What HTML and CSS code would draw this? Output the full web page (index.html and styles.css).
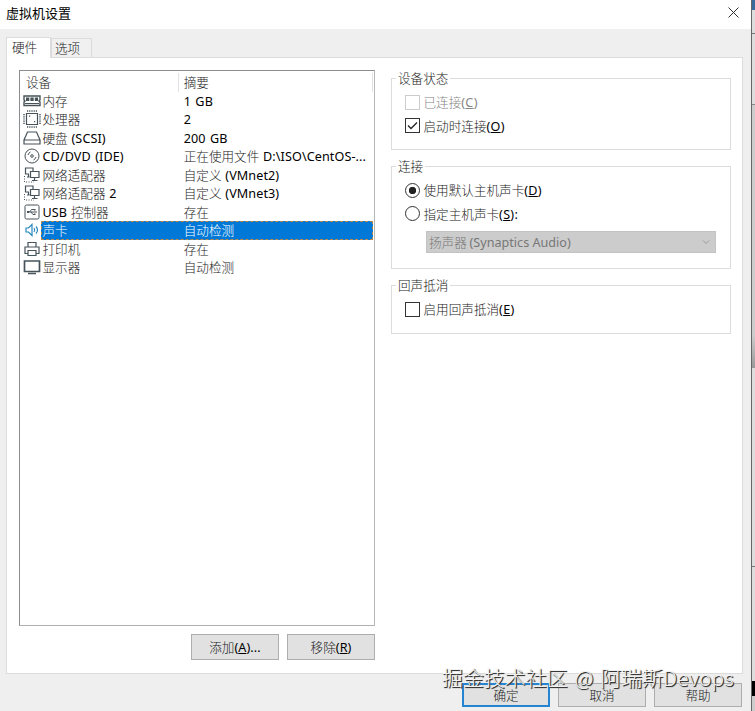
FILE: index.html
```html
<!DOCTYPE html>
<html lang="zh-CN">
<head>
<meta charset="utf-8">
<title>虚拟机设置</title>
<link rel="stylesheet" href="styles.css">
</head>
<body>
<div class="screen">
  <main class="dialog">
    <header class="titlebar">
      <h1>虚拟机设置</h1>
      <svg class="close" viewBox="0 0 11 11"><path d="M.5 .5l10 10M10.5 .5l-10 10"/></svg>
    </header>
    <nav class="tabs"><span class="tab active">硬件</span><span class="tab">选项</span></nav>
    <section class="page">
      <div class="left">
        <div class="list">
          <div class="row head"><span class="name">设备</span><span class="summary">摘要</span></div>
          <div class="row"><svg viewBox="0 0 18 18"><path stroke-width="1.400" d="M1 4h16v4l-1 1 1 1v3.500H1V10l1-1-1-1z"/><path class="solid" d="M3 5.500h3.300v3.500H3zM7.400 5.500h3.300v3.500H7.400zM11.800 5.500h3.300v3.500h-3.300z"/><path d="M2 11.500h14"/></svg><span class="name">内存</span><span class="summary"><b>1 GB</b></span></div>
          <div class="row"><svg viewBox="0 0 18 18"><path stroke-width="1.200" d="M3.500 3.500h11v11h-11z"/><path stroke-dasharray="1.200 1" stroke-width="1.500" d="M4 1h10M4 17h10M1 4v10M17 4v10"/><path class="solid" d="M6 5.500h1.200v1.200H6zM11 11h1.200v1.200H11z"/></svg><span class="name">处理器</span><span class="summary"><b>2</b></span></div>
          <div class="row"><svg viewBox="0 0 18 18"><path stroke-width="1.200" d="M4.500 3h9L17 11v4H1v-4zM1 11h16"/></svg><span class="name">硬盘 <b>(SCSI)</b></span><span class="summary"><b>200 GB</b></span></div>
          <div class="row"><svg viewBox="0 0 18 18"><circle cx="9" cy="9" r="7"/><circle cx="9" cy="9" r="1.300"/><path d="M5 8a4.500 4.500 0 0 1 2.500-3M13 10a4.500 4.500 0 0 1-2.500 3"/></svg><span class="name"><b>CD/DVD (IDE)</b></span><span class="summary">正在使用文件 <b>D:\ISO\CentOS-...</b></span></div>
          <div class="row"><svg viewBox="0 0 18 18"><path stroke-width="1.200" d="M6 8H2.500V2H10v3.500M4 11h2.500M5.500 8v3M7.500 5.500H16v6H7.500zM11.500 11.500V14M9 14.500h5.500"/><path stroke-dasharray="1 1.500" d="M1.500 10v6H11"/></svg><span class="name">网络适配器</span><span class="summary">自定义 <b>(VMnet2)</b></span></div>
          <div class="row"><svg viewBox="0 0 18 18"><path stroke-width="1.200" d="M6 8H2.500V2H10v3.500M4 11h2.500M5.500 8v3M7.500 5.500H16v6H7.500zM11.500 11.500V14M9 14.500h5.500"/><path stroke-dasharray="1 1.500" d="M1.500 10v6H11"/></svg><span class="name">网络适配器 <b>2</b></span><span class="summary">自定义 <b>(VMnet3)</b></span></div>
          <div class="row"><svg viewBox="0 0 18 18"><rect x="2" y="2" width="14" height="14" rx="1.500"/><path d="M4 9h10M6.500 9l2-2.500h2.500M8 9l2 2.500h1.500"/><path class="solid" d="M4 8h2v2H4zM11 6h1.500v1.500H11zM11 10.500h1.500V12H11z"/></svg><span class="name"><b>USB</b> 控制器</span><span class="summary">存在</span></div>
          <div class="row selected"><svg viewBox="0 0 18 18"><path stroke-width="1.200" d="M3 7h2.500L9 3.500v11L5.500 11H3zM11 7q1.500 2 0 4M13 5.500q3 3.500 0 7"/></svg><div class="fill"><span class="name">声卡</span><span class="summary">自动检测</span></div></div>
          <div class="row"><svg viewBox="0 0 18 18"><path stroke-width="1.200" d="M5 7V2.500h8V7M5 13.500H2V7h14v6.500h-3M5 10.500h8v5H5z"/></svg><span class="name">打印机</span><span class="summary">存在</span></div>
          <div class="row"><svg viewBox="0 0 18 18"><path stroke-width="1.700" d="M1.500 3h15v10.500h-15z"/><path stroke-width="1.500" d="M5 15.500h8"/></svg><span class="name">显示器</span><span class="summary">自动检测</span></div>
        </div>
        <div class="actions"><button>添加<b>(<u>A</u>)...</b></button><button>移除<b>(<u>R</u>)</b></button></div>
      </div>
      <div class="right">
        <fieldset class="status"><legend>设备状态</legend>
          <label class="option disabled"><span class="box"></span>已连接<b>(<u>C</u>)</b></label>
          <label class="option"><span class="box"><svg viewBox="0 0 13 13"><path d="M2 6.500l3 3 6-6"/></svg></span>启动时连接<b>(<u>O</u>)</b></label>
        </fieldset>
        <fieldset class="connection"><legend>连接</legend>
          <label class="option"><span class="box radio checked"></span>使用默认主机声卡<b>(<u>D</u>)</b></label>
          <label class="option"><span class="box radio"></span>指定主机声卡<b>(<u>S</u>):</b></label>
          <div class="select"><span>扬声器 <b>(Synaptics Audio)</b></span><svg viewBox="0 0 8 5"><path d="M1 .5l3 3 3-3"/></svg></div>
        </fieldset>
        <fieldset class="echo"><legend>回声抵消</legend>
          <label class="option"><span class="box"></span>启用回声抵消<b>(<u>E</u>)</b></label>
        </fieldset>
      </div>
    </section>
    <footer class="footer"><button class="primary">确定</button><button>取消</button><button>帮助</button></footer>
  </main>
  <aside class="backdrop"><i class="blue"></i><i class="pale"></i><i class="mid"></i><i class="thumb"></i><i class="track"></i><i class="lower"></i><i class="black"></i><i class="end"></i></aside>
  <div class="watermark">掘金技术社区 @ 阿瑞斯Devops</div>
</div>
</body>
</html>
```
FILE: styles.css
```css
* { box-sizing: border-box; }
body { margin: 0; overflow: hidden; }
.screen {
  position: relative; display: flex; width: 755px; height: 711px; overflow: hidden;
  font: 300 12.6px/18px "Noto Sans CJK SC", sans-serif; color: #222;
}
b { font: 400 12.6px/1 "Noto Sans", sans-serif; letter-spacing: .1px; color: #000; }
svg { fill: none; stroke: #47535a; stroke-width: 1; flex: none; }
.solid { fill: #47535a; stroke: none; }
u { text-underline-offset: 1px; }
.dialog { width: 751px; background: #efefef; display: flex; flex-direction: column; }
.titlebar { height: 29px; background: #fff; padding: 0 12px 4px 6px; display: flex; align-items: center; justify-content: space-between; }
h1 { margin: 0; font-size: 13px; font-weight: 400; line-height: 20px; color: #000; }
.close { width: 11px; height: 11px; stroke: #333; }
.tabs { display: flex; align-items: flex-end; height: 28px; padding-left: 6px; }
.tab { height: 19px; width: 41px; padding-left: 3px; border: 1px solid #dcdcdc; border-bottom: 0; background: #f0f0f0; line-height: 18px; }
.tab.active { height: 21px; width: 45px; padding-left: 5px; margin-bottom: -1px; background: #fff; line-height: 18px; position: relative; }
.page { width: 737px; height: 617px; margin-left: 6px; border: 1px solid #dcdcdc; background: #fff; padding: 12px 0 0 12px; display: flex; gap: 16px; }
.left { width: 356px; }
.list { height: 556px; border: 1px solid #8b8d90; border-right-color: #b7b7b7; border-bottom-color: #b0b0b0; padding: 2px 1px 0 3px; word-spacing: 1px; }
.row { display: flex; align-items: center; height: 18.5px; white-space: nowrap; }
.row svg { width: 18px; height: 18px; }
.row .name { width: 142px; padding-left: 1.5px; height: 18.5px; line-height: 18.5px; }
.row .summary { flex: 1; padding-left: .7px; height: 18.5px; line-height: 18.5px; }
.row.head .name { width: 156px; padding-left: 3px; border-right: 1px solid #e2e2e2; }
.row.head .summary { padding-left: 4.7px; border-right: 1px solid #e2e2e2; }
.fill { display: flex; flex: 1; height: 18.5px; color: #fff; background: #0078d7; outline: 1px dashed #b8894d; outline-offset: -1px; }
.selected svg { stroke: #2688bd; }
.actions { display: flex; justify-content: flex-end; gap: 8px; margin-top: 8px; }
button { width: 88px; height: 26px; padding: 0; border: 1px solid #adadad; background: #e1e1e1; font: inherit; color: inherit; }
.right { width: 340px; }
fieldset { margin: 0 0 7px; padding: 0 0 0 13px; border: 1px solid #dcdcdc; min-width: 0; }
legend { margin-left: -9px; padding: 0 2px; line-height: 18px; height: 18px; }
.status { height: 81px; margin-top: -1px; }
.connection { height: 112px; }
.echo { height: 58px; }
.option { display: flex; align-items: center; height: 23.5px; padding-top: 1px; }
.option b { line-height: 18px; letter-spacing: .3px; transform: translateY(1px); }
.status .option:first-of-type, .connection .option:first-of-type, .echo .option { margin-top: 3px; }
.disabled, .disabled b { color: #858585; }
.box { width: 15px; height: 15px; border: 1px solid #333; margin-right: 3.5px; flex: none; background: #fff; }
.box svg { display: block; width: 13px; height: 13px; stroke: #222; stroke-width: 1.3; }
.disabled .box { border-color: #ccc; }
.radio { border-radius: 50%; }
.checked { background: radial-gradient(circle, #222 0 3.4px, #fff 4px); }
.select { width: 290px; height: 22px; margin: 6px 0 0 21px; padding: 0 5px 0 2px; background: #ccc; border: 1px solid #c3c3c3; display: flex; align-items: center; justify-content: space-between; color: #777; }
.select b { color: #777; letter-spacing: 0; }
.select svg { width: 8px; height: 5px; stroke: #999; }
.footer { display: flex; gap: 8px; padding: 9px 0 0 462px; }
.footer button { height: 24px; line-height: 16px; }
.footer .primary { border: 2px solid #2585d3; }
.backdrop { width: 4px; border-left: 1px solid #666; background: #ddd; display: flex; flex-direction: column; }
.backdrop i { display: block; }
.blue { height: 10px; background: #396b9c; }
.pale { height: 24px; background: #ddd; border-bottom: 1px solid #777; }
.mid { height: 71px; background: #ddd; border-bottom: 1px solid #888; }
.thumb { height: 263px; background: linear-gradient(#ccc 0 230px, #999); }
.track { height: 199px; background: #ddd; border-bottom: 1px solid #777; }
.lower { height: 114px; background: #ddd; }
.black { height: 15px; background: #000; }
.end { flex: 1; background: #ccc; }
.watermark { position: absolute; left: 442px; top: 662px; font-size: 20.8px; line-height: 30px; font-weight: 300; letter-spacing: .15px; word-spacing: 2px; color: #f1f1f1; white-space: nowrap; text-shadow: 1px 1px 1px #333, 1px 1px 0 #555; }
```
